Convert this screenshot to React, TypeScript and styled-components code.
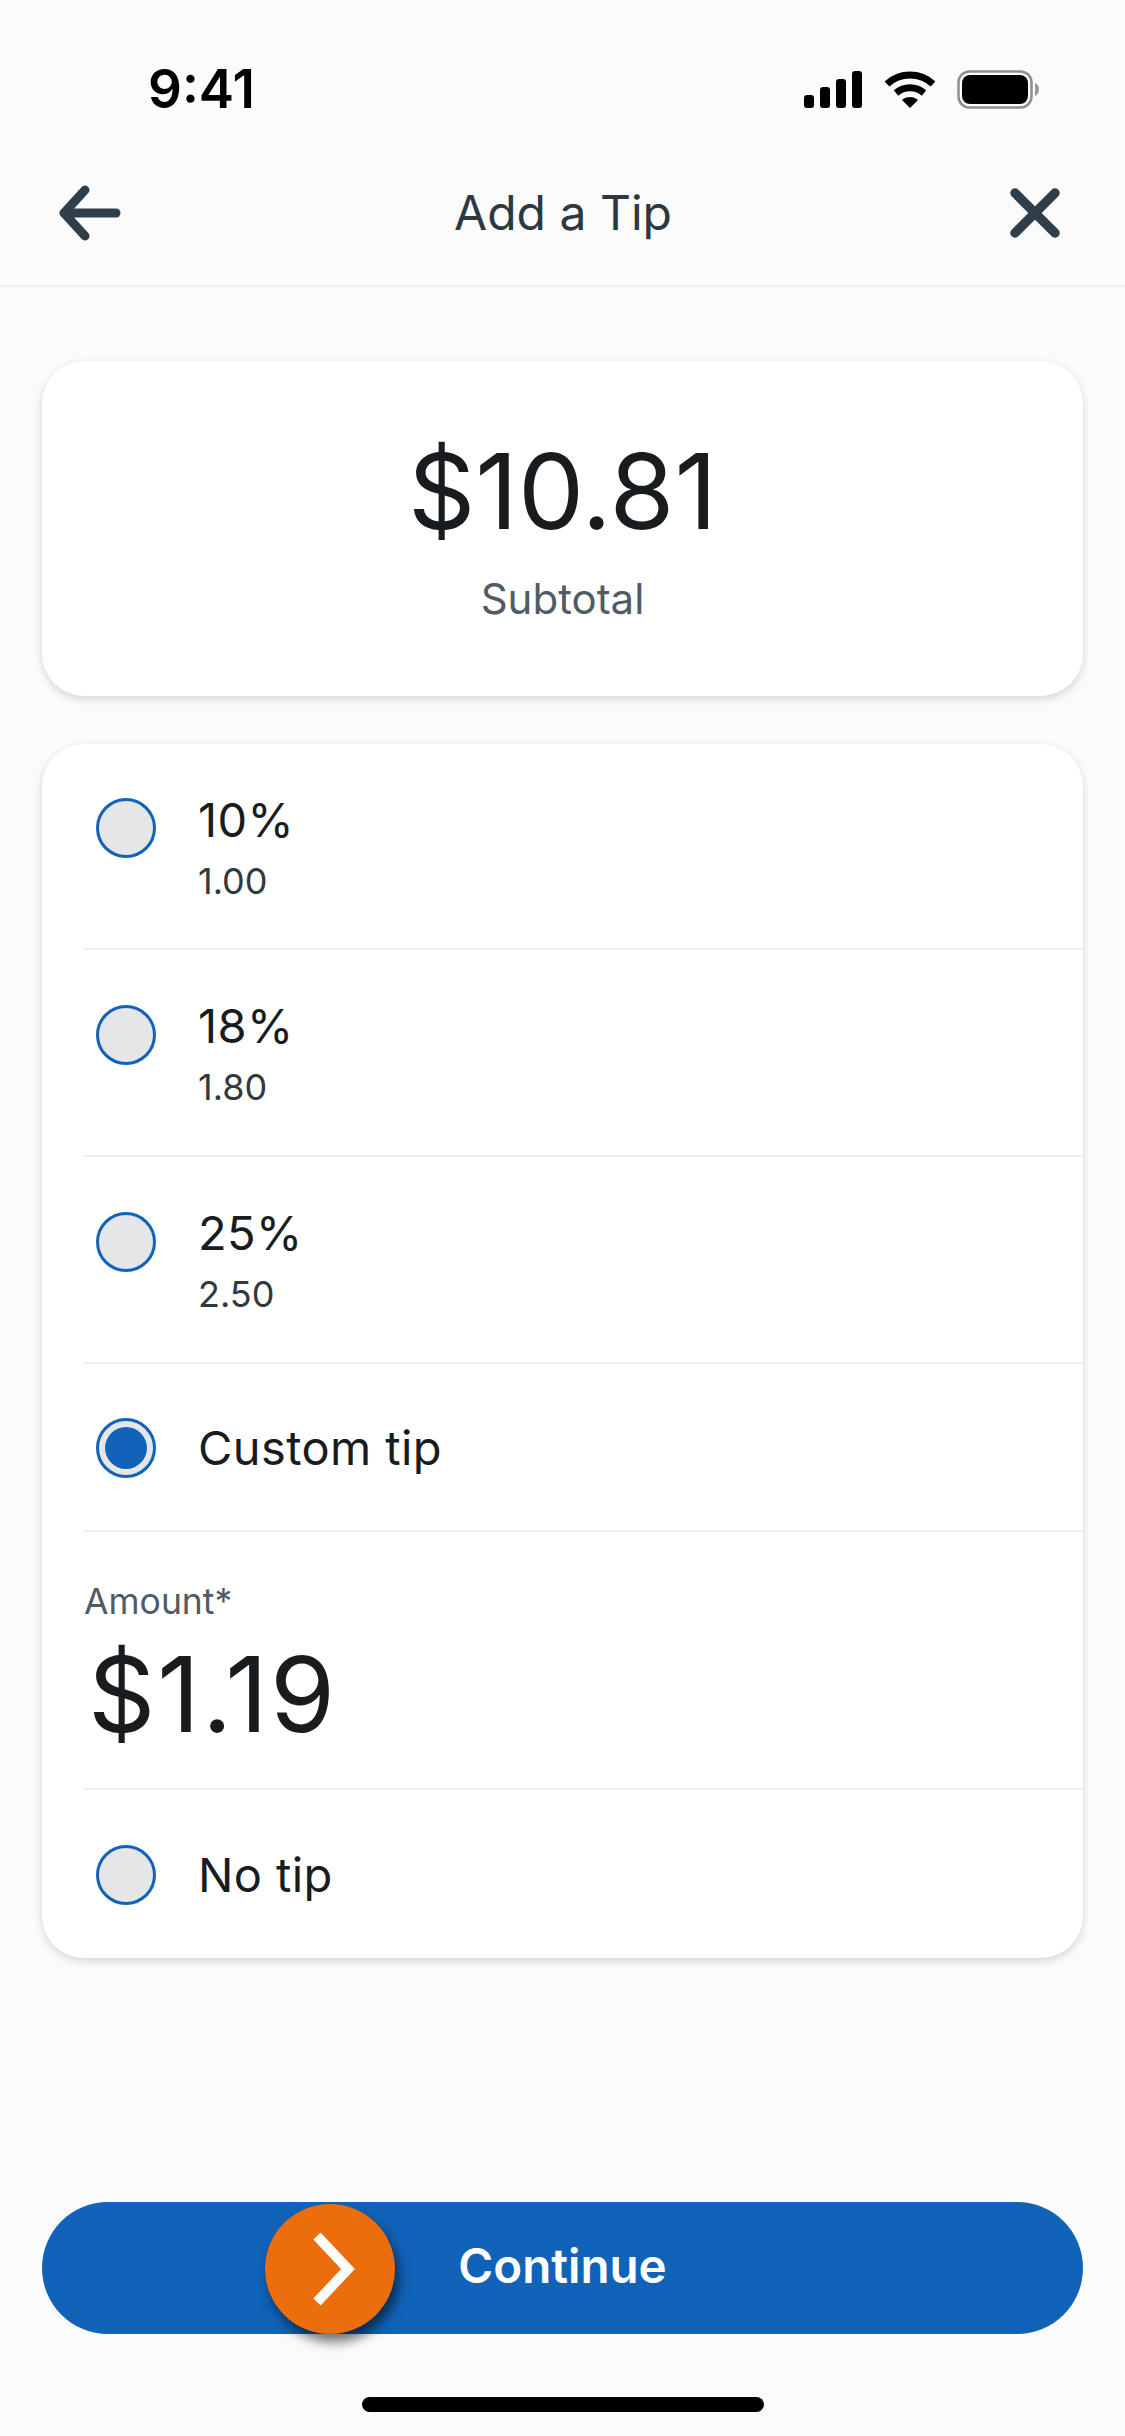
import { createGlobalStyle } from "styled-components"
import styled from "styled-components"

const GlobalStyle = createGlobalStyle`
  html, body {
    margin: 0;
    padding: 0;
    background: #fbfbfb;
  }
  * {
    box-sizing: border-box;
  }
`
const Screen = styled.div`
  width: 1125px;
  height: 2436px;
  display: flex;
  flex-direction: column;
  background: #fbfbfb;
  font-family: Inter, "Liberation Sans", sans-serif;
  color: #191c1f;
  overflow: hidden;
`
const StatusBar = styled.div`
  height: 172px;
  flex: none;
  display: flex;
  align-items: flex-start;
  justify-content: space-between;
  padding: 60px 86px 0 148px;
`
const Time = styled.span`
  font-size: 53px;
  line-height: 58px;
  font-weight: 600;
  color: #000;
`
const StatusIcons = styled.div`
  display: flex;
  align-items: center;
  gap: 21px;
  padding-top: 10px;
`
const NavBar = styled.header`
  height: 115px;
  flex: none;
  display: flex;
  align-items: center;
  justify-content: space-between;
  padding: 0 64px 31px 58px;
  border-bottom: 2px solid #efefef;
`
const NavTitle = styled.h1`
  margin: 0 5px 2px 0;
  font-size: 48px;
  font-weight: 400;
  color: #2c3842;
`
const Content = styled.main`
  flex: 1;
  display: flex;
  flex-direction: column;
  padding: 74px 42px 0;
  gap: 48px;
`
const Card = styled.section`
  background: #fff;
  border-radius: 42px;
  box-shadow: 0 3px 8px rgb(0 0 0 / 0.16);
`
const SubtotalCard = styled(Card)`
  height: 335px;
  display: flex;
  flex-direction: column;
  align-items: center;
  padding-top: 72px;
`
const Total = styled.div`
  font-size: 105px;
  line-height: 116px;
`
const SubtotalLabel = styled.div`
  margin-top: 26px;
  font-size: 42px;
  line-height: 48px;
  color: #505b65;
`
const OptionCard = styled(Card)`
  height: 1214px;
  padding-left: 42px;
`
const Row = styled.div<{ $height: number }>`
  height: ${(p) => p.$height}px;
  display: flex;
  align-items: center;
  padding: 2px 0 0 12px;
  border-bottom: 2px solid #efefef;
  &:last-child {
    border-bottom: none;
  }
`
const Radio = styled.span<{ $checked?: boolean; $raised?: boolean }>`
  width: 60px;
  height: 60px;
  flex: none;
  display: flex;
  align-items: center;
  justify-content: center;
  border-radius: 50%;
  background: #e4e6e8;
  border: 3px solid #1063b8;
  margin: 0 42px ${(p) => (p.$raised ? "38px" : "0")} 0;
  &::after {
    content: "";
    display: ${(p) => (p.$checked ? "block" : "none")};
    width: 42px;
    height: 42px;
    border-radius: 50%;
    background: #1063b8;
  }
`
const OptionText = styled.div`
  display: flex;
  flex-direction: column;
`
const OptionLabel = styled.span`
  font-size: 47px;
  line-height: 54px;
  letter-spacing: 0.4px;
`
const OptionValue = styled.span`
  margin-top: 13px;
  font-size: 36px;
  line-height: 42px;
  color: #31393f;
`
const AmountRow = styled.div`
  height: 258px;
  padding-top: 50px;
  border-bottom: 2px solid #efefef;
`
const AmountLabel = styled.div`
  font-size: 35.5px;
  line-height: 40px;
  color: #505b65;
`
const AmountValue = styled.div`
  margin-top: 14px;
  padding-left: 4px;
  font-size: 105px;
  line-height: 116px;
  letter-spacing: 2px;
`
const Footer = styled.footer`
  padding: 0 42px;
  flex: none;
`
const ContinueButton = styled.button`
  position: relative;
  width: 100%;
  height: 132px;
  display: flex;
  align-items: center;
  justify-content: center;
  padding: 0 0 5px;
  border: none;
  border-radius: 66px;
  background: #1063b8;
  color: #fff;
  font-family: inherit;
  font-size: 47.5px;
  font-weight: 600;
`
const SwipeHandle = styled.span`
  position: absolute;
  left: 223px;
  top: 2px;
  width: 130px;
  height: 130px;
  display: flex;
  align-items: center;
  justify-content: center;
  padding-left: 8px;
  border-radius: 50%;
  background: #ec6d0b;
  box-shadow: 4px 8px 12px rgb(0 0 0 / 0.55);
`
const HomeBar = styled.div`
  width: 402px;
  height: 15px;
  flex: none;
  margin: 63px auto 24px;
  border-radius: 8px;
  background: #000;
`

const Signal = () => (
  <svg width="59" height="37" viewBox="0 0 59 37">
    <rect x="0" y="24" width="10" height="13" rx="3" />
    <rect x="16" y="16" width="10" height="21" rx="3" />
    <rect x="32" y="8" width="10" height="29" rx="3" />
    <rect x="48" y="0" width="10" height="37" rx="3" />
  </svg>
)

const Wifi = () => (
  <svg width="52" height="38" viewBox="0 0 52 38" fill="none" stroke="#000" strokeWidth="7">
    <path d="M3 13C16 1 36 1 49 13" />
    <path d="M12 22C20 15 32 15 40 22" />
    <path d="M26 37L18 29C22 25 30 25 34 29Z" fill="#000" stroke="none" />
  </svg>
)

const Battery = () => (
  <svg width="82" height="39" viewBox="0 0 82 39">
    <rect x="1.5" y="1.5" width="73" height="36" rx="11" fill="none" stroke="#8e8e8e" strokeWidth="2.5" />
    <rect x="5" y="5" width="66" height="29" rx="8" fill="#000" />
    <path d="M78 13C81 14 82 17 82 19.5C82 22 81 25 78 26Z" fill="#9a9a9a" />
  </svg>
)

const BackArrow = () => (
  <svg width="64" height="56" viewBox="0 0 64 56" fill="none" stroke="#2f3e4b" strokeWidth="9" strokeLinecap="round" strokeLinejoin="round">
    <path d="M58 28H8" />
    <path d="M27 5L6 28L27 51" />
  </svg>
)

const CloseIcon = () => (
  <svg width="52" height="50" viewBox="0 0 52 50" fill="none" stroke="#2f3e4b" strokeWidth="9.5" strokeLinecap="round">
    <path d="M6 5L46 45" />
    <path d="M46 5L6 45" />
  </svg>
)

const Chevron = () => (
  <svg width="42" height="72" viewBox="0 0 42 72" fill="none" stroke="#fff" strokeWidth="10">
    <path d="M4 3L35 36L4 69" />
  </svg>
)

const percentOptions = [
  { label: "10%", value: "1.00" },
  { label: "18%", value: "1.80" },
  { label: "25%", value: "2.50" },
]

export default function App() {
  return (
    <Screen>
      <GlobalStyle />
      <StatusBar>
        <Time>9:41</Time>
        <StatusIcons>
          <Signal />
          <Wifi />
          <Battery />
        </StatusIcons>
      </StatusBar>

      <NavBar>
        <BackArrow />
        <NavTitle>Add a Tip</NavTitle>
        <CloseIcon />
      </NavBar>

      <Content>
        <SubtotalCard>
          <Total>$10.81</Total>
          <SubtotalLabel>Subtotal</SubtotalLabel>
        </SubtotalCard>

        <OptionCard>
          {percentOptions.map((o) => (
            <Row key={o.label} $height={o.label === "10%" ? 206 : 207}>
              <Radio $raised />
              <OptionText>
                <OptionLabel>{o.label}</OptionLabel>
                <OptionValue>{o.value}</OptionValue>
              </OptionText>
            </Row>
          ))}
          <Row $height={168}>
            <Radio $checked />
            <OptionLabel>Custom tip</OptionLabel>
          </Row>
          <AmountRow>
            <AmountLabel>Amount*</AmountLabel>
            <AmountValue>$1.19</AmountValue>
          </AmountRow>
          <Row $height={168}>
            <Radio />
            <OptionLabel>No tip</OptionLabel>
          </Row>
        </OptionCard>
      </Content>

      <Footer>
        <ContinueButton>
          <SwipeHandle>
            <Chevron />
          </SwipeHandle>
          Continue
        </ContinueButton>
      </Footer>
      <HomeBar />
    </Screen>
  )
}
